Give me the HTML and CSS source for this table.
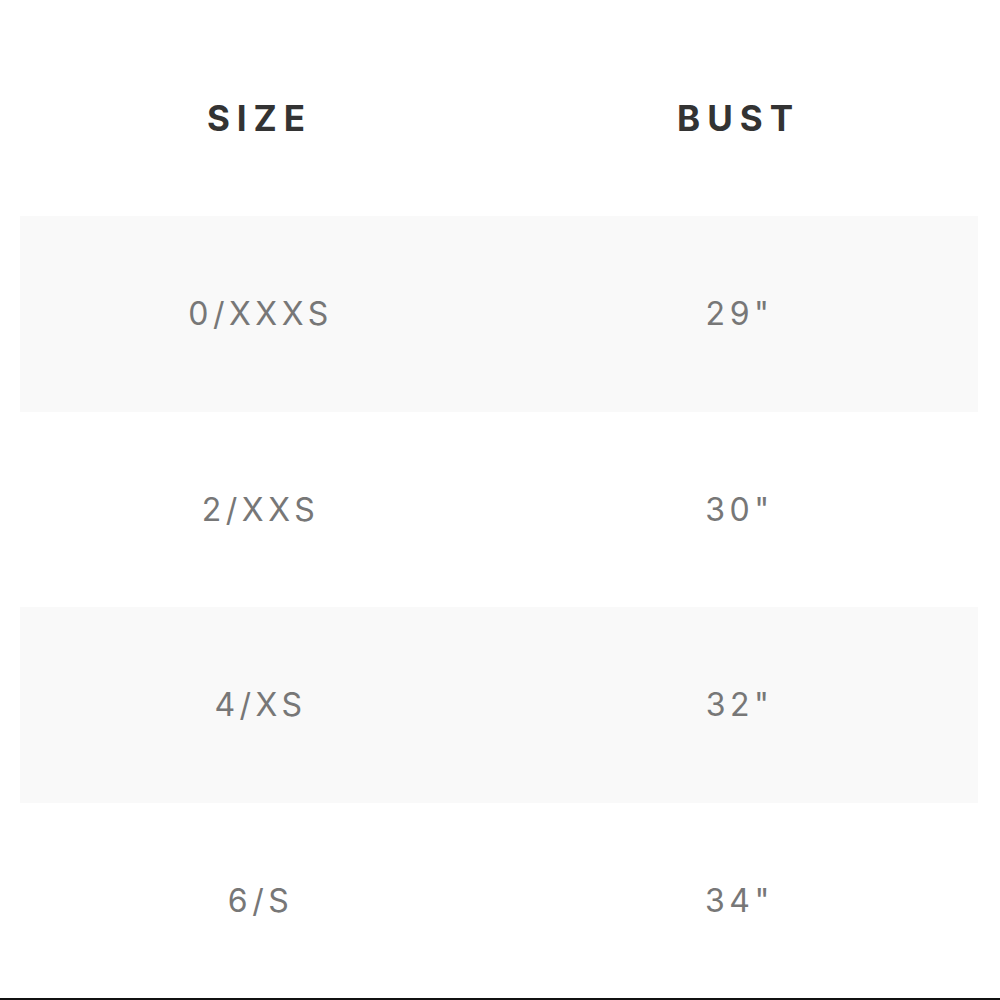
FILE: index.html
```html
<!DOCTYPE html>
<html>
<head>
<meta charset="utf-8">
<link rel="stylesheet" href="styles.css">
</head>
<body>
<div class="wrap">
  <div class="row head"><div class="cell">SIZE</div><div class="cell">BUST</div></div>
  <div class="row alt"><div class="cell">0/XXXS</div><div class="cell">29"</div></div>
  <div class="row"><div class="cell">2/XXS</div><div class="cell">30"</div></div>
  <div class="row alt"><div class="cell">4/XS</div><div class="cell">32"</div></div>
  <div class="row"><div class="cell">6/S</div><div class="cell">34"</div></div>
</div>
<div class="rule"></div>
</body>
</html>
```
FILE: styles.css
```css
html, body { margin: 0; padding: 0; background: #fff; }
body { font-family: Inter, "Liberation Sans", sans-serif; }
.wrap { padding: 20px 22px 0 20px; }
.row { display: grid; grid-template-columns: 1fr 1fr; height: 195.5px; align-items: center; }
.row.head { height: 196px; }
.row.alt { background: #f9f9f9; }
.cell { text-align: center; font-size: 32px; letter-spacing: 4.5px; color: #777; padding-left: 2px; }
.head .cell { font-weight: 700; color: #333; font-size: 35px; letter-spacing: 7px; padding-left: 0; }
.rule { height: 2px; background: #111; }
```
